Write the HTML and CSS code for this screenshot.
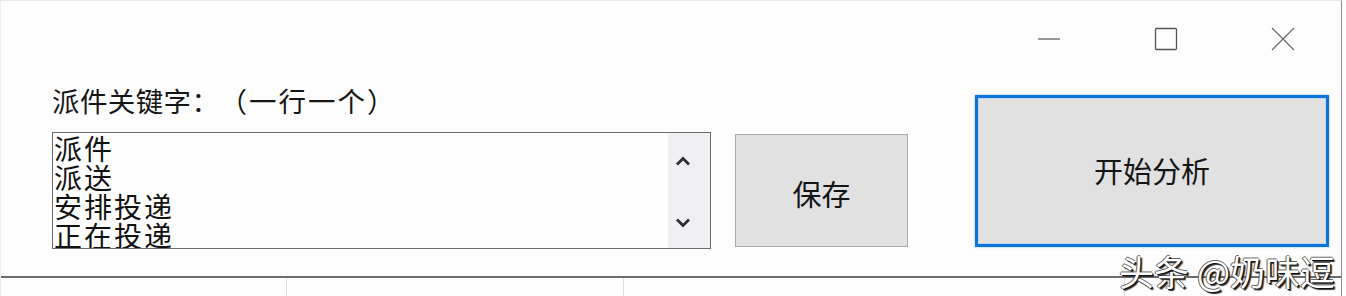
FILE: index.html
```html
<!DOCTYPE html>
<html lang="zh">
<head>
<meta charset="utf-8">
<title>派件关键字</title>
<link rel="stylesheet" href="styles.css">
</head>
<body>
<div class="window">
  <div class="titlebar">
    <div class="ctrl">
      <svg width="24" height="24" viewBox="0 0 24 24"><line x1="1" y1="12" x2="23" y2="12" stroke="#555" stroke-width="1.2"/></svg>
    </div>
    <div class="ctrl">
      <svg width="24" height="24" viewBox="0 0 24 24"><rect x="1.5" y="1.5" width="21" height="21" rx="1" fill="none" stroke="#555" stroke-width="1.3"/></svg>
    </div>
    <div class="ctrl">
      <svg width="24" height="24" viewBox="0 0 24 24"><path d="M1 1 L23 23 M23 1 L1 23" stroke="#666" stroke-width="1.1" fill="none"/></svg>
    </div>
  </div>
  <div class="main">
    <div class="left">
      <div class="label">派件关键字：<span class="paren">（一行一个）</span></div>
      <div class="textbox">
        <div class="lines">派件<br>派送<br>安排投递<br>正在投递</div>
        <div class="scrollbar">
          <svg width="16" height="10" viewBox="0 0 16 10"><path d="M2 8.5 L8 2.5 L14 8.5" fill="none" stroke="#2e2e36" stroke-width="2.8"/></svg>
          <svg width="16" height="10" viewBox="0 0 16 10"><path d="M2 1.5 L8 7.5 L14 1.5" fill="none" stroke="#2e2e36" stroke-width="2.8"/></svg>
        </div>
      </div>
    </div>
    <div class="btn save">保存</div>
    <div class="btn start"><span>开始分析</span></div>
  </div>
  <div class="table">
    <div class="col c1"></div>
    <div class="col c2"><span>快件单号查询</span></div>
    <div class="col c3"><span>派件状态信息</span></div>
    <div class="col c4"></div>
  </div>
  <div class="watermark">头条 @奶味逗</div>
</div>
</body>
</html>
```
FILE: styles.css
```css
html, body {
  margin: 0;
  padding: 0;
  background: #fdfdfe;
}
body {
  width: 1346px;
  height: 296px;
  overflow: hidden;
  font-family: "Noto Sans CJK SC", "Noto Sans", sans-serif;
  color: #1b1b1b;
}
.window {
  position: relative;
  width: 1342px;
  height: 296px;
  border-top: 1px solid #e6e6ec;
  border-left: 1px solid #ececf0;
  border-right: 1px solid #8e8695;
  box-sizing: border-box;
  background: #fdfdfe;
  display: flex;
  flex-direction: column;
}
.titlebar {
  height: 75px;
  display: flex;
  justify-content: flex-end;
  flex: none;
}
.ctrl {
  width: 117px;
  height: 75px;
  display: flex;
  align-items: center;
  justify-content: center;
}
.main {
  flex: none;
  height: 200px;
  display: flex;
  align-items: flex-start;
  padding-left: 51px;
  padding-top: 6px;
  box-sizing: border-box;
}
.left {
  width: 659px;
  display: flex;
  flex-direction: column;
}
.label {
  height: 36px;
  line-height: 36px;
  font-size: 27.5px;
  letter-spacing: 0.4px;
  margin-bottom: 14px;
  white-space: nowrap;
  text-spacing-trim: space-all;
  color: #151515;
}
.paren {
  letter-spacing: 2px;
}
.textbox {
  height: 117px;
  border: 1px solid #6c6c70;
  box-sizing: border-box;
  display: flex;
  background: #fefefe;
  overflow: hidden;
}
.lines {
  flex: 1;
  font-size: 28px;
  line-height: 29px;
  padding-left: 1px;
  padding-top: 1px;
  letter-spacing: 2px;
  color: #111;
  overflow: hidden;
}
.scrollbar {
  width: 42px;
  background: #f0f0f2;
  display: flex;
  flex-direction: column;
  align-items: center;
  justify-content: space-between;
  padding: 23px 12px 20px 0;
  box-sizing: border-box;
}
.btn {
  background: #e1e1e2;
  box-sizing: border-box;
  display: flex;
  align-items: center;
  justify-content: center;
  color: #151515;
}
.save {
  width: 173px;
  height: 113px;
  margin-left: 24px;
  margin-top: 52px;
  border: 1px solid #a9a9ab;
  font-size: 29px;
  padding-top: 5px;
}
.start {
  width: 354px;
  height: 152px;
  margin-left: 67px;
  margin-top: 13px;
  border: 3px solid #0a74d8;
  box-shadow: inset 0 0 0 1px #bcd8f4, 0 0 2px #8fc1f0;
  font-size: 29px;
  padding-bottom: 2px;
}
.table {
  flex: none;
  height: 20px;
  border-top: 2px solid #6b6b70;
  display: flex;
  background: #fefefe;
  overflow: hidden;
}
.col {
  height: 20px;
  border-right: 1px solid #dcdce0;
  box-sizing: border-box;
  overflow: hidden;
  font-size: 22px;
  color: #b8b8bc;
  display: flex;
}
.col span {
  display: block;
  margin-top: 12px;
  white-space: nowrap;
}
.c1 { width: 286px; }
.c2 { width: 337px; padding-left: 82px; }
.c3 { width: 501px; padding-left: 16px; }
.c4 { flex: 1; border-right: none; }
.watermark {
  position: absolute;
  right: 6px;
  top: 249px;
  font-size: 35px;
  line-height: 42px;
  color: #ffffff;
  white-space: nowrap;
  text-spacing-trim: space-all;
  text-shadow: 1px 1px 0 #111, 2px 2px 1px #333, -1px 0 0 #555, 0 -1px 0 #666;
}
```
